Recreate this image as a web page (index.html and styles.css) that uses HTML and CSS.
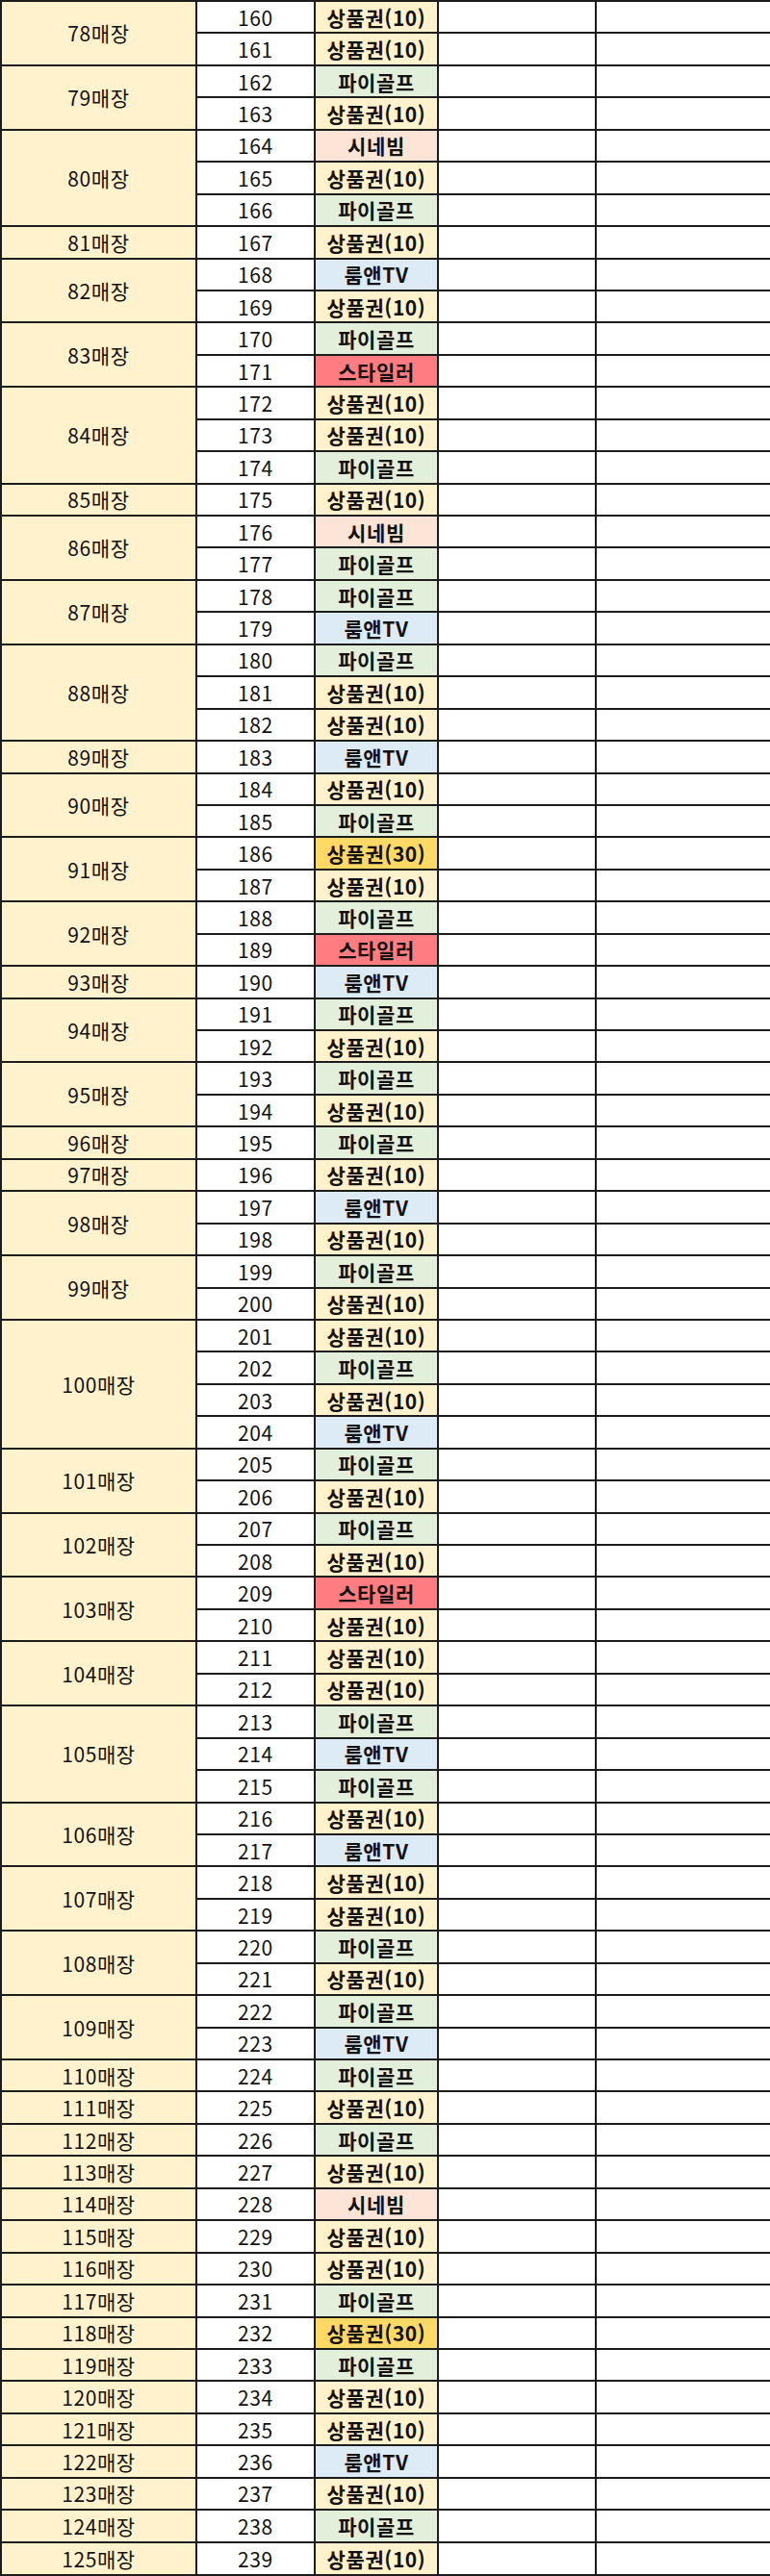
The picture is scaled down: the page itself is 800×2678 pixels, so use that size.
FILE: index.html
```html
<!DOCTYPE html>
<html lang="ko">
<head>
<meta charset="utf-8">
<title>매장 목록</title>
<link rel="stylesheet" href="styles.css">
</head>
<body>
<table class="sheet">
<colgroup>
<col class="w-store"><col class="w-num"><col class="w-item"><col class="w-e1"><col class="w-e2">
</colgroup>
<tbody>
<tr><td class="store" rowspan="2">78매장</td><td class="num">160</td><td class="item gift">상품권(10)</td><td></td><td></td></tr>
<tr><td class="num">161</td><td class="item gift">상품권(10)</td><td></td><td></td></tr>
<tr><td class="store" rowspan="2">79매장</td><td class="num">162</td><td class="item golf">파이골프</td><td></td><td></td></tr>
<tr><td class="num">163</td><td class="item gift">상품권(10)</td><td></td><td></td></tr>
<tr><td class="store" rowspan="3">80매장</td><td class="num">164</td><td class="item cine">시네빔</td><td></td><td></td></tr>
<tr><td class="num">165</td><td class="item gift">상품권(10)</td><td></td><td></td></tr>
<tr><td class="num">166</td><td class="item golf">파이골프</td><td></td><td></td></tr>
<tr><td class="store">81매장</td><td class="num">167</td><td class="item gift">상품권(10)</td><td></td><td></td></tr>
<tr><td class="store" rowspan="2">82매장</td><td class="num">168</td><td class="item room">룸앤TV</td><td></td><td></td></tr>
<tr><td class="num">169</td><td class="item gift">상품권(10)</td><td></td><td></td></tr>
<tr><td class="store" rowspan="2">83매장</td><td class="num">170</td><td class="item golf">파이골프</td><td></td><td></td></tr>
<tr><td class="num">171</td><td class="item styler">스타일러</td><td></td><td></td></tr>
<tr><td class="store" rowspan="3">84매장</td><td class="num">172</td><td class="item gift">상품권(10)</td><td></td><td></td></tr>
<tr><td class="num">173</td><td class="item gift">상품권(10)</td><td></td><td></td></tr>
<tr><td class="num">174</td><td class="item golf">파이골프</td><td></td><td></td></tr>
<tr><td class="store">85매장</td><td class="num">175</td><td class="item gift">상품권(10)</td><td></td><td></td></tr>
<tr><td class="store" rowspan="2">86매장</td><td class="num">176</td><td class="item cine">시네빔</td><td></td><td></td></tr>
<tr><td class="num">177</td><td class="item golf">파이골프</td><td></td><td></td></tr>
<tr><td class="store" rowspan="2">87매장</td><td class="num">178</td><td class="item golf">파이골프</td><td></td><td></td></tr>
<tr><td class="num">179</td><td class="item room">룸앤TV</td><td></td><td></td></tr>
<tr><td class="store" rowspan="3">88매장</td><td class="num">180</td><td class="item golf">파이골프</td><td></td><td></td></tr>
<tr><td class="num">181</td><td class="item gift">상품권(10)</td><td></td><td></td></tr>
<tr><td class="num">182</td><td class="item gift">상품권(10)</td><td></td><td></td></tr>
<tr><td class="store">89매장</td><td class="num">183</td><td class="item room">룸앤TV</td><td></td><td></td></tr>
<tr><td class="store" rowspan="2">90매장</td><td class="num">184</td><td class="item gift">상품권(10)</td><td></td><td></td></tr>
<tr><td class="num">185</td><td class="item golf">파이골프</td><td></td><td></td></tr>
<tr><td class="store" rowspan="2">91매장</td><td class="num">186</td><td class="item gift30">상품권(30)</td><td></td><td></td></tr>
<tr><td class="num">187</td><td class="item gift">상품권(10)</td><td></td><td></td></tr>
<tr><td class="store" rowspan="2">92매장</td><td class="num">188</td><td class="item golf">파이골프</td><td></td><td></td></tr>
<tr><td class="num">189</td><td class="item styler">스타일러</td><td></td><td></td></tr>
<tr><td class="store">93매장</td><td class="num">190</td><td class="item room">룸앤TV</td><td></td><td></td></tr>
<tr><td class="store" rowspan="2">94매장</td><td class="num">191</td><td class="item golf">파이골프</td><td></td><td></td></tr>
<tr><td class="num">192</td><td class="item gift">상품권(10)</td><td></td><td></td></tr>
<tr><td class="store" rowspan="2">95매장</td><td class="num">193</td><td class="item golf">파이골프</td><td></td><td></td></tr>
<tr><td class="num">194</td><td class="item gift">상품권(10)</td><td></td><td></td></tr>
<tr><td class="store">96매장</td><td class="num">195</td><td class="item golf">파이골프</td><td></td><td></td></tr>
<tr><td class="store">97매장</td><td class="num">196</td><td class="item gift">상품권(10)</td><td></td><td></td></tr>
<tr><td class="store" rowspan="2">98매장</td><td class="num">197</td><td class="item room">룸앤TV</td><td></td><td></td></tr>
<tr><td class="num">198</td><td class="item gift">상품권(10)</td><td></td><td></td></tr>
<tr><td class="store" rowspan="2">99매장</td><td class="num">199</td><td class="item golf">파이골프</td><td></td><td></td></tr>
<tr><td class="num">200</td><td class="item gift">상품권(10)</td><td></td><td></td></tr>
<tr><td class="store" rowspan="4">100매장</td><td class="num">201</td><td class="item gift">상품권(10)</td><td></td><td></td></tr>
<tr><td class="num">202</td><td class="item golf">파이골프</td><td></td><td></td></tr>
<tr><td class="num">203</td><td class="item gift">상품권(10)</td><td></td><td></td></tr>
<tr><td class="num">204</td><td class="item room">룸앤TV</td><td></td><td></td></tr>
<tr><td class="store" rowspan="2">101매장</td><td class="num">205</td><td class="item golf">파이골프</td><td></td><td></td></tr>
<tr><td class="num">206</td><td class="item gift">상품권(10)</td><td></td><td></td></tr>
<tr><td class="store" rowspan="2">102매장</td><td class="num">207</td><td class="item golf">파이골프</td><td></td><td></td></tr>
<tr><td class="num">208</td><td class="item gift">상품권(10)</td><td></td><td></td></tr>
<tr><td class="store" rowspan="2">103매장</td><td class="num">209</td><td class="item styler">스타일러</td><td></td><td></td></tr>
<tr><td class="num">210</td><td class="item gift">상품권(10)</td><td></td><td></td></tr>
<tr><td class="store" rowspan="2">104매장</td><td class="num">211</td><td class="item gift">상품권(10)</td><td></td><td></td></tr>
<tr><td class="num">212</td><td class="item gift">상품권(10)</td><td></td><td></td></tr>
<tr><td class="store" rowspan="3">105매장</td><td class="num">213</td><td class="item golf">파이골프</td><td></td><td></td></tr>
<tr><td class="num">214</td><td class="item room">룸앤TV</td><td></td><td></td></tr>
<tr><td class="num">215</td><td class="item golf">파이골프</td><td></td><td></td></tr>
<tr><td class="store" rowspan="2">106매장</td><td class="num">216</td><td class="item gift">상품권(10)</td><td></td><td></td></tr>
<tr><td class="num">217</td><td class="item room">룸앤TV</td><td></td><td></td></tr>
<tr><td class="store" rowspan="2">107매장</td><td class="num">218</td><td class="item gift">상품권(10)</td><td></td><td></td></tr>
<tr><td class="num">219</td><td class="item gift">상품권(10)</td><td></td><td></td></tr>
<tr><td class="store" rowspan="2">108매장</td><td class="num">220</td><td class="item golf">파이골프</td><td></td><td></td></tr>
<tr><td class="num">221</td><td class="item gift">상품권(10)</td><td></td><td></td></tr>
<tr><td class="store" rowspan="2">109매장</td><td class="num">222</td><td class="item golf">파이골프</td><td></td><td></td></tr>
<tr><td class="num">223</td><td class="item room">룸앤TV</td><td></td><td></td></tr>
<tr><td class="store">110매장</td><td class="num">224</td><td class="item golf">파이골프</td><td></td><td></td></tr>
<tr><td class="store">111매장</td><td class="num">225</td><td class="item gift">상품권(10)</td><td></td><td></td></tr>
<tr><td class="store">112매장</td><td class="num">226</td><td class="item golf">파이골프</td><td></td><td></td></tr>
<tr><td class="store">113매장</td><td class="num">227</td><td class="item gift">상품권(10)</td><td></td><td></td></tr>
<tr><td class="store">114매장</td><td class="num">228</td><td class="item cine">시네빔</td><td></td><td></td></tr>
<tr><td class="store">115매장</td><td class="num">229</td><td class="item gift">상품권(10)</td><td></td><td></td></tr>
<tr><td class="store">116매장</td><td class="num">230</td><td class="item gift">상품권(10)</td><td></td><td></td></tr>
<tr><td class="store">117매장</td><td class="num">231</td><td class="item golf">파이골프</td><td></td><td></td></tr>
<tr><td class="store">118매장</td><td class="num">232</td><td class="item gift30">상품권(30)</td><td></td><td></td></tr>
<tr><td class="store">119매장</td><td class="num">233</td><td class="item golf">파이골프</td><td></td><td></td></tr>
<tr><td class="store">120매장</td><td class="num">234</td><td class="item gift">상품권(10)</td><td></td><td></td></tr>
<tr><td class="store">121매장</td><td class="num">235</td><td class="item gift">상품권(10)</td><td></td><td></td></tr>
<tr><td class="store">122매장</td><td class="num">236</td><td class="item room">룸앤TV</td><td></td><td></td></tr>
<tr><td class="store">123매장</td><td class="num">237</td><td class="item gift">상품권(10)</td><td></td><td></td></tr>
<tr><td class="store">124매장</td><td class="num">238</td><td class="item golf">파이골프</td><td></td><td></td></tr>
<tr><td class="store">125매장</td><td class="num">239</td><td class="item gift">상품권(10)</td><td></td><td></td></tr>
</tbody>
</table>
</body>
</html>
```
FILE: styles.css
```css
html, body {
  margin: 0;
  padding: 0;
  background: #ffffff;
}

.sheet {
  width: 800px;
  height: 2678px;
  table-layout: fixed;
  border-collapse: collapse;
  font-family: "Noto Sans CJK KR", "Noto Sans", sans-serif;
  font-size: 21px;
  letter-spacing: 0.6px;
  color: #111111;
}

.w-store { width: 203px; }
.w-num { width: 123px; }
.w-item { width: 128px; }
.w-e1 { width: 164px; }
.w-e2 { width: 182px; }

.sheet td {
  border: 2px solid #1c1c1c;
  padding: 0;
  line-height: 24px;
  text-align: center;
  vertical-align: middle;
  background: #ffffff;
  white-space: nowrap;
}

.sheet td.store { background: #fff2cc; }
.sheet td.item { font-weight: 700; }
.sheet td.gift { background: #fff2cc; }
.sheet td.gift30 { background: #ffd966; }
.sheet td.golf { background: #e2efda; }
.sheet td.cine { background: #fce4d6; }
.sheet td.room { background: #ddebf7; }
.sheet td.styler { background: #ff7c80; }
```
